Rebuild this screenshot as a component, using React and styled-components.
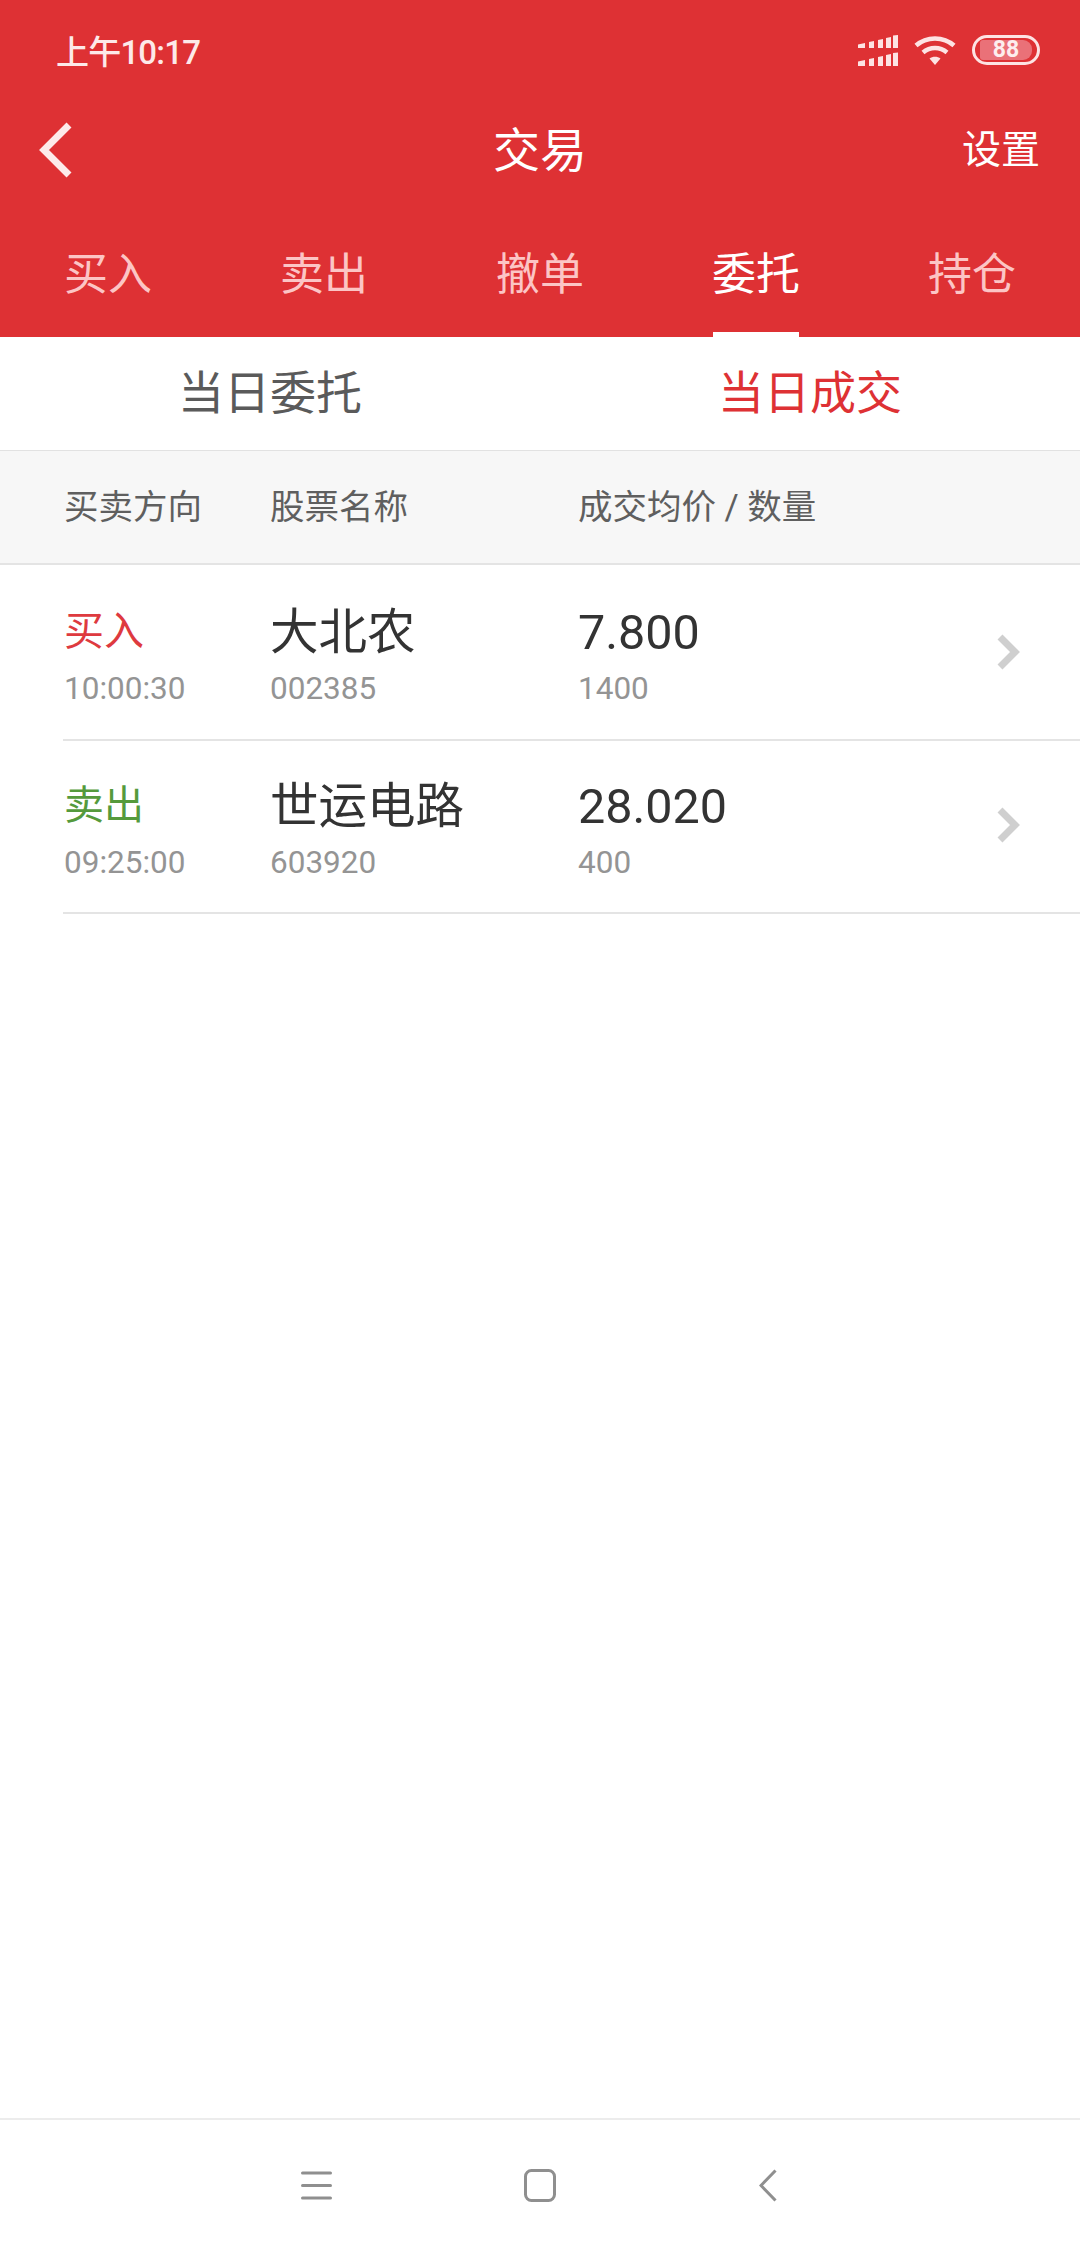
import styled, { createGlobalStyle } from 'styled-components';

const GlobalStyle = createGlobalStyle`
  html, body {
    margin: 0;
    padding: 0;
    background: #fff;
  }

  body {
    font-family: Roboto, "Noto Sans CJK SC", sans-serif;
  }

  * {
    box-sizing: border-box;
  }
`;

const TABS = ['买入', '卖出', '撤单', '委托', '持仓'];

const DEALS = [
  { side: '买入', buy: true, time: '10:00:30', name: '大北农', code: '002385', price: '7.800', qty: '1400' },
  { side: '卖出', buy: false, time: '09:25:00', name: '世运电路', code: '603920', price: '28.020', qty: '400' },
];

export default function App() {
  return (
    <Page>
      <GlobalStyle />
      <Header>
        <StatusBar>
          <Clock>上午10:17</Clock>
          <StatusIcons>
            <SignalIcon />
            <WifiIcon />
            <Battery>
              <BatteryFill>88</BatteryFill>
            </Battery>
          </StatusIcons>
        </StatusBar>
        <NavBar>
          <BackIcon />
          <Title>交易</Title>
          <Settings>设置</Settings>
        </NavBar>
        <Tabs>
          {TABS.map((tab) => (
            <Tab key={tab} $active={tab === '委托'}>
              {tab}
            </Tab>
          ))}
        </Tabs>
      </Header>

      <SubTabs>
        <SubTab>当日委托</SubTab>
        <SubTab $active>当日成交</SubTab>
      </SubTabs>

      <TableHead>
        <span>买卖方向</span>
        <span>股票名称</span>
        <span>成交均价 / 数量</span>
      </TableHead>

      <List>
        {DEALS.map((deal) => (
          <Row key={deal.code}>
            <Cell>
              <Side $buy={deal.buy}>{deal.side}</Side>
              <Sub>{deal.time}</Sub>
            </Cell>
            <Cell>
              <Main>{deal.name}</Main>
              <Sub>{deal.code}</Sub>
            </Cell>
            <Cell>
              <Main>{deal.price}</Main>
              <Sub>{deal.qty}</Sub>
            </Cell>
            <ChevronIcon />
          </Row>
        ))}
      </List>

      <BottomNav>
        <MenuIcon />
        <HomeIcon />
        <ReturnIcon />
      </BottomNav>
    </Page>
  );
}

const SignalIcon = () => (
  <svg width="40" height="31" viewBox="0 0 40 31" fill="#fde3e3">
    <path d="M0 9.500l7-1.500V13H0zM11 7l5-1v7h-5zM20 5l5-1v9h-5zM28 3l5-1v11h-5zM35 .500l5-.500v13h-5z" />
    <path d="M0 26.500l7-1.500v6H0zM11 24l5-1v8h-5zM20 22l5-1v10h-5zM28 20l5-1v12h-5zM35 18l5-.500V31h-5z" />
  </svg>
);

const WifiIcon = () => (
  <svg width="42" height="30" viewBox="0 0 42 30" fill="none" stroke="#fde3e3" strokeWidth="4.500">
    <path d="M2 10.500C12.500 1 29.500 1 40 10.500" />
    <path d="M9 17.500c7-6 17-6 24 0" />
    <path d="M21 30l-5.500-6.500c3-2.500 8-2.500 11 0z" fill="#fde3e3" stroke="none" />
  </svg>
);

const BackIcon = () => (
  <BackSvg width="34" height="56" viewBox="0 0 34 56" fill="none" stroke="#fdeaea" strokeWidth="7">
    <path d="M31 3L6 28l25 25" />
  </BackSvg>
);

const ChevronIcon = () => (
  <ChevronSvg width="24" height="36" viewBox="0 0 24 36" fill="none" stroke="#cfcfcf" strokeWidth="7">
    <path d="M3 3l15 15L3 33" />
  </ChevronSvg>
);

const MenuIcon = () => (
  <svg width="31" height="29" viewBox="0 0 31 29" fill="none" stroke="#8f8f8f" strokeWidth="3" strokeLinecap="round">
    <path d="M1.500 2h28M1.500 14.500h28M1.500 27h28" />
  </svg>
);

const HomeIcon = () => (
  <svg width="32" height="33" viewBox="0 0 32 33" fill="none" stroke="#8f8f8f" strokeWidth="3">
    <rect x="1.500" y="1.500" width="29" height="30" rx="6" />
  </svg>
);

const ReturnIcon = () => (
  <svg width="18" height="33" viewBox="0 0 18 33" fill="none" stroke="#8f8f8f" strokeWidth="3">
    <path d="M16.500 1.500L2 16.500l14.500 15" />
  </svg>
);

const Page = styled.div`
  display: flex;
  flex-direction: column;
  width: 1080px;
  height: 2248px;
  background: #fff;
  overflow: hidden;
`;

const Header = styled.header`
  height: 337px;
  background: #de3134;
  color: #fff;
`;

const StatusBar = styled.div`
  display: flex;
  align-items: center;
  justify-content: space-between;
  height: 100px;
  padding: 0 40px 0 56px;
`;

const Clock = styled.span`
  font-size: 33px;
  font-weight: 500;
  letter-spacing: -0.8px;
  color: #fde9e9;
`;

const StatusIcons = styled.div`
  display: flex;
  align-items: center;
  gap: 16px;
`;

const Battery = styled.div`
  display: flex;
  align-items: center;
  width: 68px;
  height: 30px;
  padding: 4px;
  border: 3px solid #fde3e3;
  border-radius: 15px;
`;

const BatteryFill = styled.div`
  display: flex;
  align-items: center;
  justify-content: center;
  width: 52px;
  height: 20px;
  margin-left: 1px;
  border-radius: 3px 9px 9px 3px;
  background: #ea7178;
  color: #fdeeee;
  font-size: 23px;
  font-weight: 700;
  line-height: 20px;
`;

const NavBar = styled.div`
  display: flex;
  align-items: center;
  justify-content: space-between;
  height: 100px;
  padding: 0 40px 0 38px;
`;

const BackSvg = styled.svg`
  display: block;
`;

const Title = styled.h1`
  margin: 0 0 0 46px;
  font-size: 47px;
  font-weight: 400;
  line-height: 1;
`;

const Settings = styled.span`
  font-size: 39px;
  line-height: 1;
`;

const Tabs = styled.nav`
  display: grid;
  grid-template-columns: repeat(5, 216px);
  height: 137px;
`;

const Tab = styled.div`
  display: flex;
  justify-content: center;
  justify-self: center;
  width: 86px;
  height: 137px;
  padding-top: 49px;
  border-bottom: 5px solid ${(p) => (p.$active ? '#fff' : 'transparent')};
  color: ${(p) => (p.$active ? '#fff' : '#fcc5c5')};
  font-size: 44px;
  line-height: 52px;
  white-space: nowrap;
`;

const SubTabs = styled.div`
  display: grid;
  grid-template-columns: 1fr 1fr;
  height: 113px;
  padding-bottom: 10px;
`;

const SubTab = styled.div`
  display: flex;
  align-items: center;
  justify-content: center;
  color: ${(p) => (p.$active ? '#de3134' : '#5a5a5a')};
  font-size: 46px;
`;

const TableHead = styled.div`
  display: grid;
  grid-template-columns: 206px 308px 1fr;
  align-items: center;
  height: 115px;
  padding: 0 0 6px 64px;
  border-top: 1px solid #e2e2e2;
  border-bottom: 2px solid #e4e4e4;
  background: #f7f7f7;
  color: #5f5f5f;
  font-size: 34.500px;
`;

const List = styled.div`
  flex: 1;
`;

const Row = styled.div`
  position: relative;
  display: grid;
  grid-template-columns: 206px 308px 1fr;
  height: 176px;
  margin-left: 63px;
  padding: 37px 0 0 1px;
  border-bottom: 2px solid #e4e4e4;

  & + & {
    height: 173px;
    padding-top: 35px;

    svg {
      top: 66px;
    }
  }
`;

const Cell = styled.div`
  display: flex;
  flex-direction: column;
  gap: 5px;
`;

const Side = styled.div`
  height: 62px;
  padding-top: 2px;
  color: ${(p) => (p.$buy ? '#de3a3f' : '#559a3c')};
  font-size: 40px;
  line-height: 56px;
`;

const Main = styled.div`
  height: 62px;
  color: #333;
  font-size: 48.500px;
  line-height: 62px;
  white-space: nowrap;
`;

const Sub = styled.div`
  color: #949494;
  font-size: 31.500px;
  line-height: 40px;
`;

const ChevronSvg = styled.svg`
  position: absolute;
  top: 69px;
  right: 59px;
`;

const BottomNav = styled.footer`
  display: grid;
  grid-template-columns: 223px 235px auto;
  align-items: center;
  height: 130px;
  padding: 2px 0 0 301px;
  border-top: 2px solid #ececec;
`;
